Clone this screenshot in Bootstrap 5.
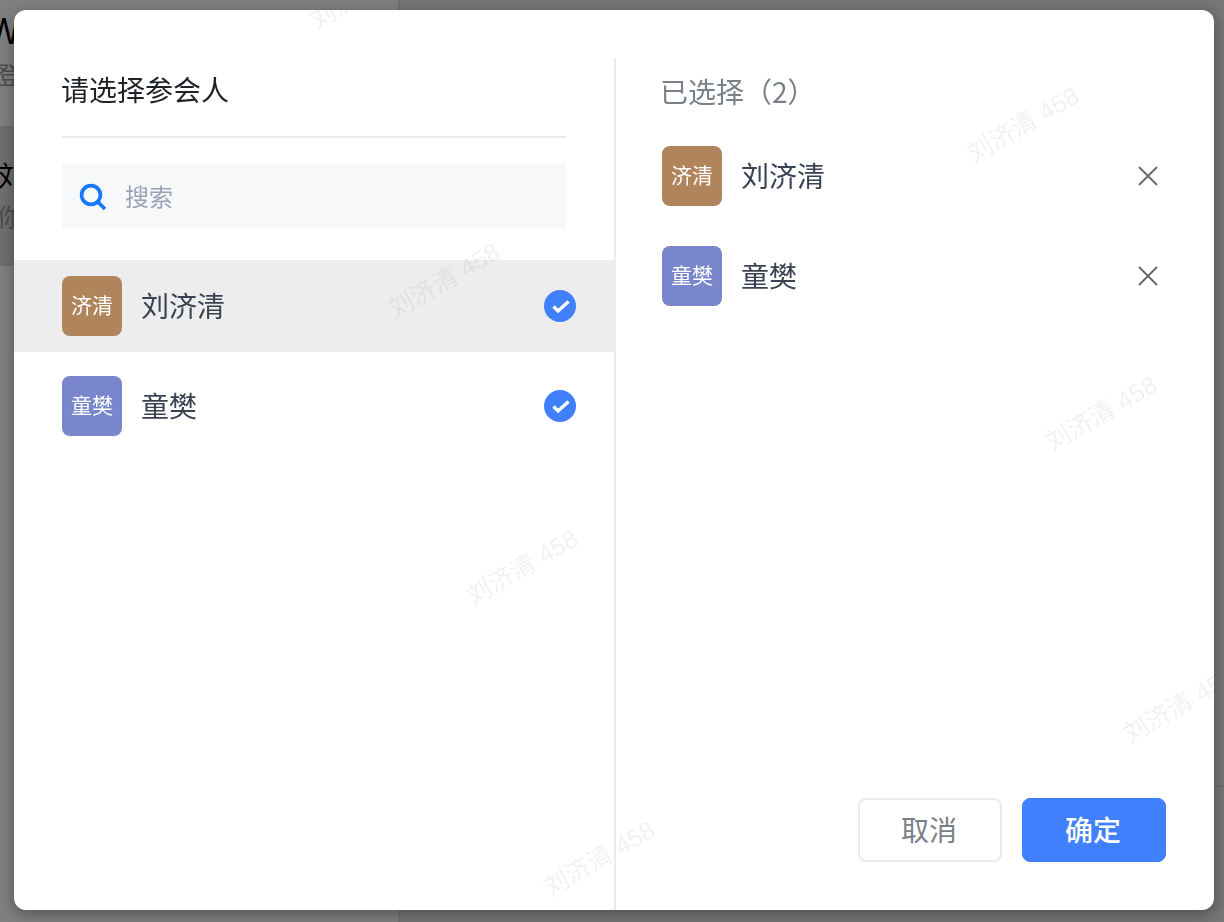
<!DOCTYPE html>
<html lang="zh-CN">
<head>
<meta charset="utf-8">
<title>请选择参会人</title>
<link href="https://cdn.jsdelivr.net/npm/bootstrap@5.3.0/dist/css/bootstrap.min.css" rel="stylesheet">
<style>
html,body{height:100%;overflow:hidden;}
body{font-family:"Noto Sans CJK SC","Liberation Sans",sans-serif;background:#fff;color:#000;}
.pg-side{width:400px;border-right:2px solid #e3e3e3;}
.pg-main{background:#ececec;}
.pg-foot{height:137px;border-top:2px solid #dcdcdc;margin-top:auto;}
.pg-head{height:126px;padding:6px 0 0 0;margin-left:-12px;}
.pg-w{font-size:36px;line-height:44px;}
.pg-sub{font-size:24px;line-height:36px;color:#999;margin-left:9px;margin-top:6px;}
.pg-row{height:140px;background:#dedede;margin-left:-3px;padding-top:30px;}
.pg-row-t{font-size:28px;line-height:38px;}
.pg-row-s{font-size:24px;line-height:36px;color:#999;margin-top:4px;}
.veil{position:fixed;inset:0;background:rgba(0,0,0,.5);}
.dlg{position:fixed;left:14px;top:10px;width:1200px;height:900px;background:#fff;border-radius:12px;overflow:hidden;box-shadow:0 4px 16px rgba(0,0,0,.35);}
.pane-l{width:600px;flex:none;}
.pane-sep{width:2px;flex:none;background:#ebebeb;margin-top:48px;}
.pane-r{padding:48px 48px 48px 46px;}
.dlg-title{box-sizing:content-box;margin:46px 48px 0;height:67px;padding-top:13px;font-size:28px;line-height:40px;color:#1f2329;font-weight:400;text-indent:-1px;border-bottom:2px solid #ebebeb;}
.srch{margin:26px 48px 32px;height:64px;background:#f7f8fa;padding-left:17px;}
.srch-ico{margin-top:2px;}
.srch-ph{font-size:24px;color:#9aa3b5;margin-left:18px;line-height:60px;}
.p-row{height:92px;padding:0 38px 0 48px;margin-bottom:8px;}
.p-row.on{background:#ededed;}
.ava{width:60px;height:60px;border-radius:8px;color:#fff;font-size:21px;line-height:56px;text-align:center;flex:none;}
.ava-b{background:#b0855c;}
.ava-v{background:#7986cb;}
.p-name{font-size:28px;line-height:40px;color:#3a4252;margin-left:19px;margin-top:-2px;}
.sel-title{font-size:28px;line-height:40px;color:#7a8089;margin-top:13px;margin-bottom:35px;text-indent:-2px;}
.s-row{height:60px;margin-bottom:40px;padding-right:7px;}
.dlg-btn{width:144px;height:64px;border-radius:8px;font-size:28px;line-height:1;padding:0 2px 2px 0;display:flex;align-items:center;justify-content:center;}
.dlg-btn.btn-outline-secondary{border:2px solid #ebebeb;color:#7a8089;background:#fff;}
.dlg-btn.btn-primary{background:#4080fc;border-color:#4080fc;color:#fff;font-weight:500;}
.btn-gap{gap:20px;}
.wm{position:absolute;white-space:nowrap;font-family:"Liberation Sans","Noto Sans CJK SC",sans-serif;font-size:25px;line-height:32px;color:rgba(0,0,0,.055);transform:translate(-50%,-50%) rotate(-30deg);pointer-events:none;}
.wm1{left:352px;top:-19px;}
.wm2{left:430px;top:270px;}
.wm3{left:508px;top:557px;}
.wm4{left:585px;top:848px;}
.wm5{left:1009px;top:114px;}
.wm6{left:1087px;top:403px;}
.wm7{left:1165px;top:695px;}
</style>
</head>
<body>
<div class="d-flex h-100">
  <aside class="pg-side overflow-hidden flex-none">
    <div class="pg-head">
      <div class="pg-w">WX</div>
      <div class="pg-sub">登录</div>
    </div>
    <div class="pg-row">
      <div class="pg-row-t">刘济清</div>
      <div class="pg-row-s">你好</div>
    </div>
  </aside>
  <main class="pg-main flex-grow-1 d-flex flex-column">
    <div class="pg-foot"></div>
  </main>
</div>
<div class="veil"></div>
<div class="dlg d-flex">
  <section class="pane-l d-flex flex-column">
    <h5 class="dlg-title">请选择参会人</h5>
    <div class="srch d-flex align-items-center">
      <svg class="srch-ico" width="28" height="28" viewBox="0 0 28 28" fill="none" stroke="#1677ff" stroke-width="3.6"><circle cx="12" cy="12" r="9.4"/><path d="M18.6 18.6l7.4 7.4" stroke-width="3.8"/></svg>
      <span class="srch-ph">搜索</span>
    </div>
    <div class="p-row on d-flex align-items-center">
      <div class="ava ava-b">济清</div>
      <div class="p-name flex-grow-1">刘济清</div>
      <svg width="32" height="32" viewBox="0 0 32 32"><circle cx="16" cy="16" r="16" fill="#4080fc"/><path d="M9.5 16.5l4.6 4.5 10.4-9.5" fill="none" stroke="#fff" stroke-width="3.4"/></svg>
    </div>
    <div class="p-row d-flex align-items-center">
      <div class="ava ava-v">童樊</div>
      <div class="p-name flex-grow-1">童樊</div>
      <svg width="32" height="32" viewBox="0 0 32 32"><circle cx="16" cy="16" r="16" fill="#4080fc"/><path d="M9.5 16.5l4.6 4.5 10.4-9.5" fill="none" stroke="#fff" stroke-width="3.4"/></svg>
    </div>
  </section>
  <div class="pane-sep"></div>
  <section class="pane-r flex-grow-1 d-flex flex-column">
    <div class="sel-title">已选择（2）</div>
    <div class="s-row d-flex align-items-center">
      <div class="ava ava-b">济清</div>
      <div class="p-name flex-grow-1">刘济清</div>
      <svg width="22" height="22" viewBox="0 0 22 22" fill="none" stroke="#666" stroke-width="1.8"><path d="M2 2l18 18M20 2L2 20"/></svg>
    </div>
    <div class="s-row d-flex align-items-center">
      <div class="ava ava-v">童樊</div>
      <div class="p-name flex-grow-1">童樊</div>
      <svg width="22" height="22" viewBox="0 0 22 22" fill="none" stroke="#666" stroke-width="1.8"><path d="M2 2l18 18M20 2L2 20"/></svg>
    </div>
    <div class="mt-auto d-flex justify-content-end btn-gap">
      <button type="button" class="btn btn-outline-secondary dlg-btn">取消</button>
      <button type="button" class="btn btn-primary dlg-btn">确定</button>
    </div>
  </section>
  <span class="wm wm1">刘济清 458</span>
  <span class="wm wm2">刘济清 458</span>
  <span class="wm wm3">刘济清 458</span>
  <span class="wm wm4">刘济清 458</span>
  <span class="wm wm5">刘济清 458</span>
  <span class="wm wm6">刘济清 458</span>
  <span class="wm wm7">刘济清 458</span>
</div>
<script src="https://cdn.jsdelivr.net/npm/bootstrap@5.3.0/dist/js/bootstrap.bundle.min.js"></script>
</body>
</html>
